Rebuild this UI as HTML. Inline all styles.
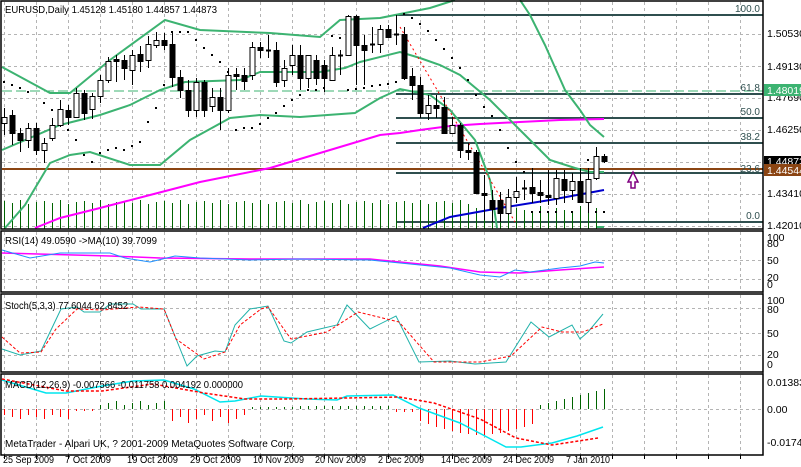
<!DOCTYPE html>
<html><head><meta charset="utf-8"><style>
html,body{margin:0;padding:0;background:#fff;}
svg{display:block;font-family:"Liberation Sans",sans-serif;font-size:10px;}
</style></head><body>
<svg id="c" width="801" height="467" viewBox="0 0 801 467" xmlns="http://www.w3.org/2000/svg">
<rect width="801" height="467" fill="#fff"/>
<g id="grid" stroke="#b4b4b4" stroke-dasharray="3,3" stroke-width="1"></g>
<line x1="2" y1="91" x2="763" y2="91" stroke="#3cb371" stroke-dasharray="10,4" stroke-width="1"/>
<line x1="2" y1="169" x2="763" y2="169" stroke="#8b4513" stroke-width="2"/>
<g stroke="#2f4f4f" stroke-width="2">
<line x1="396" y1="15" x2="763" y2="15"/><line x1="396" y1="94" x2="763" y2="94"/>
<line x1="396" y1="118" x2="763" y2="118"/><line x1="396" y1="143" x2="763" y2="143"/>
<line x1="396" y1="173" x2="763" y2="173"/><line x1="396" y1="222" x2="763" y2="222"/>
</g>
<g fill="#2f4f4f" font-size="10" text-anchor="end">
<text x="760" y="12">100.0</text><text x="760" y="91">61.8</text><text x="760" y="115">50.0</text>
<text x="760" y="140">38.2</text><text x="760" y="172">23.6</text><text x="760" y="219">0.0</text>
</g>
<g id="vol" stroke="#006400" stroke-width="1"></g>
<polyline fill="none" stroke="#ff00ff" stroke-width="2" points="35,228 60,218 100,208 150,195 200,182 270,168 330,150 380,135 400,133 420,130 450,126 480,124 520,122 560,120 604,119"/>
<polyline fill="none" stroke="#0000cd" stroke-width="2" points="423,228 450,217 500,208 550,200 604,190"/>
<g fill="none" stroke="#3cb371" stroke-width="2">
<polyline points="2,67 50,93 70,93 110,60 165,20 200,30 270,33 320,37 340,20 380,18 400,14 430,8 455,0"/>
<polyline points="520,0 530,15 545,45 565,90 580,110 590,125 604,137"/>
<polyline points="2,150 60,125 100,115 130,105 160,90 185,82 240,80 260,72 320,72 345,68 360,62 400,52 420,58 440,65 460,75 490,100 520,130 550,160 575,168 590,172 604,172"/>
<polyline points="5,228 25,205 50,163 70,155 90,152 130,165 160,165 190,140 230,118 260,115 300,117 355,113 380,98 400,89 430,95 450,110 475,140 490,180 497,228"/>
<polyline points="597,227 604,227"/>
</g>
<line x1="400" y1="27" x2="515" y2="222" stroke="#ff0000" stroke-dasharray="2,3"/>
<g id="sar" fill="#000"></g>
<g id="cand"></g>
<path d="M628 182 L633 172 L638 182 L635 182 L635 188 L631 188 L631 182 Z" fill="#fff" stroke="#800080" stroke-width="1.5"/>
<text x="5" y="13" fill="#000" textLength="212" lengthAdjust="spacingAndGlyphs">EURUSD,Daily  1.45128 1.45180 1.44857 1.44873</text>

<polyline fill="none" stroke="#ff00ff" stroke-width="1.5" points="2,253 110,256 160,258 250,259 370,259 400,262 440,266 480,272 520,273 560,270 604,267"/>
<polyline fill="none" stroke="#1e90ff" stroke-width="1" points="2,250 30,258 60,253 110,253 125,258 150,262 175,256 200,258 250,260 300,259 370,260 400,263 450,268 480,275 500,277 515,270 530,272 545,270 560,268 580,266 595,262 604,263"/>
<text x="5" y="244" fill="#000" textLength="152" lengthAdjust="spacingAndGlyphs">RSI(14) 49.0590  ->MA(10) 39.7099</text>

<polyline fill="none" stroke="#20b2aa" stroke-width="1" points="2,349 20,355 41,351 61,309 77,307 84,312 100,312 110,304 133,304 141,309 164,309 187,366 197,356 215,351 225,352 235,325 250,309 268,306 284,341 291,343 307,332 337,325 347,305 370,329 396,316 419,362 450,361 475,364 506,362 531,322 549,337 572,325 580,339 588,332 603,314"/>
<polyline fill="none" stroke="#ff0000" stroke-width="1" stroke-dasharray="3,2" points="2,337 20,353 41,352 56,329 77,309 102,310 138,307 164,309 176,339 204,359 225,352 240,325 261,309 268,307 291,339 307,336 327,332 358,312 399,322 434,362 480,362 511,356 542,327 562,332 583,332 603,324"/>
<text x="5" y="309" fill="#000" textLength="123" lengthAdjust="spacingAndGlyphs">Stoch(5,3,3) 77.6044 62.8452</text>

<g id="hist" stroke-width="1"></g>
<polyline fill="none" stroke="#00e5ee" stroke-width="1.5" points="2,380 46,393 66,393 102,386 133,381 164,380 194,389 220,402 235,401 261,396 307,399 337,400 347,396 393,395 419,408 460,423 485,436 506,447 521,447 552,443 577,436 603,427"/>
<polyline fill="none" stroke="#ff0000" stroke-width="1.5" stroke-dasharray="3,2" points="2,379 66,391 102,391 153,384 204,393 245,399 286,399 347,398 399,397 434,403 480,419 516,438 552,445 598,438"/>
<text x="5" y="388" fill="#000" textLength="238" lengthAdjust="spacingAndGlyphs">MACD(12,26,9) -0.007566 -0.011758 0.004192 0.000000</text>
<text x="5" y="447" fill="#000" textLength="290" lengthAdjust="spacingAndGlyphs">MetaTrader - Alpari UK, ? 2001-2009 MetaQuotes Software Corp.</text>

<g fill="none" stroke="#000" stroke-width="1.5">
<rect x="1" y="1" width="762" height="228"/>
<rect x="1" y="231" width="762" height="61"/>
<rect x="1" y="294" width="762" height="78"/>
<rect x="1" y="374" width="762" height="81"/>
</g>
<g stroke="#000"><line x1="763" y1="0" x2="763" y2="455"/></g>
<g fill="#000" font-size="10.5">
<text x="767" y="37">1.50530</text><text x="767" y="70">1.49130</text><text x="767" y="101">1.47690</text>
<text x="767" y="133">1.46250</text><text x="767" y="197">1.43410</text><text x="767" y="229">1.42010</text>
</g>
<rect x="764" y="84" width="37" height="12" fill="#3cb371"/><text x="767" y="94" fill="#fff" font-size="10.5">1.48019</text>
<rect x="764" y="156" width="37" height="11" fill="#000"/><text x="767" y="165" fill="#fff" font-size="10.5">1.44873</text>
<rect x="764" y="164" width="37" height="12" fill="#8b4513"/><text x="767" y="174" fill="#fff" font-size="10.5">1.44544</text>
<g fill="#000" font-size="10.5">
<text x="767" y="241">100</text><text x="767" y="247">80</text><text x="767" y="264">50</text><text x="767" y="281">20</text><text x="767" y="288">0</text>
<text x="767" y="304">100</text><text x="767" y="313">80</text><text x="767" y="337">50</text><text x="767" y="358">20</text><text x="767" y="368">0</text>
<text x="767" y="386">0.01383</text><text x="767" y="413">0.00</text><text x="767" y="446">-0.01747</text>
</g>
<g fill="#000" font-size="10" lengthAdjust="spacingAndGlyphs">
<text x="3" y="463" textLength="51" lengthAdjust="spacingAndGlyphs">25 Sep 2009</text>
<text x="65" y="463" textLength="46" lengthAdjust="spacingAndGlyphs">7 Oct 2009</text>
<text x="127" y="463" textLength="51" lengthAdjust="spacingAndGlyphs">19 Oct 2009</text>
<text x="190" y="463" textLength="51" lengthAdjust="spacingAndGlyphs">29 Oct 2009</text>
<text x="253" y="463" textLength="51" lengthAdjust="spacingAndGlyphs">10 Nov 2009</text>
<text x="315" y="463" textLength="51" lengthAdjust="spacingAndGlyphs">20 Nov 2009</text>
<text x="378" y="463" textLength="46" lengthAdjust="spacingAndGlyphs">2 Dec 2009</text>
<text x="441" y="463" textLength="51" lengthAdjust="spacingAndGlyphs">14 Dec 2009</text>
<text x="503" y="463" textLength="51" lengthAdjust="spacingAndGlyphs">24 Dec 2009</text>
<text x="566" y="463" textLength="44" lengthAdjust="spacingAndGlyphs">7 Jan 2010</text>
</g>
<g stroke="#000" id="ticks"></g>
</svg>
<script>
var NS="http://www.w3.org/2000/svg";
function el(p,t,a){var e=document.createElementNS(NS,t);for(var k in a)e.setAttribute(k,a[k]);document.getElementById(p).appendChild(e);return e;}
var hs=[34,66,98,130,162,194,226,260,279,308,333,355,409];
for(var x=4;x<763;x+=32){[[2,229],[232,292],[295,372],[375,455]].forEach(function(r){el('grid','line',{x1:x+.5,y1:r[0],x2:x+.5,y2:r[1]});});el('ticks','line',{x1:x+.5,y1:455,x2:x+.5,y2:459});}
hs.forEach(function(y){el('grid','line',{x1:2,y1:y+.5,x2:763,y2:y+.5});});
var C=[[4,108,135,123,117],[12,110,145,115,133],[20,128,152,133,140],[28,123,148,140,128],[36,123,155,128,150],[44,138,163,150,143],[52,118,141,138,125],[60,100,127,125,109],[68,105,125,110,117],[76,88,118,117,93],[84,90,120,93,113],[92,93,119,109,96],[100,75,103,96,80],[108,57,83,80,61],[116,55,82,59,61],[124,55,80,60,68],[132,50,85,70,55],[140,46,72,54,61],[148,36,68,60,44],[156,32,48,45,40],[164,33,50,40,45],[172,33,87,44,77],[180,70,98,77,90],[188,80,117,90,110],[196,78,117,110,82],[204,80,117,82,110],[212,88,112,106,97],[220,88,130,97,110],[228,68,113,110,75],[236,68,90,74,76],[244,68,90,75,81],[252,42,80,75,47],[260,42,58,47,50],[268,35,58,50,50],[276,42,87,50,82],[284,60,87,80,68],[292,45,75,65,55],[300,45,90,55,78],[308,55,88,78,55],[316,55,85,60,78],[324,60,92,65,78],[332,47,80,80,55],[340,50,75,55,55],[348,15,55,55,16],[356,15,85,16,45],[364,35,85,45,50],[372,27,53,44,44],[380,25,53,44,29],[388,25,38,29,37],[396,15,45,34,34],[404,27,80,34,78],[412,68,100,76,85],[420,77,118,85,113],[428,95,120,113,105],[436,95,118,105,108],[444,97,133,107,133],[452,117,133,133,125],[460,123,158,125,150],[468,143,160,150,152],[476,150,193,152,193],[484,175,220,193,195],[492,190,222,200,209],[500,192,222,200,213],[508,189,215,213,197],[516,177,203,197,191],[524,180,200,188,188],[532,168,203,187,193],[540,180,203,192,195],[548,170,205,195,197],[556,170,205,198,178],[564,170,203,179,190],[572,173,200,190,181],[580,168,203,181,202],[588,168,213,202,179],[596,147,180,178,156],[604,154,163,156,161]];
C.forEach(function(c,i){var x=c[0];el('cand','line',{x1:x+.5,y1:c[1],x2:x+.5,y2:c[2],stroke:'#000'});
var t=Math.min(c[3],c[4]),b=Math.max(c[3],c[4]);
if(b-t<1){el('cand','line',{x1:x-2,y1:t+.5,x2:x+3,y2:t+.5,stroke:'#000','stroke-width':2});}
else el('cand','rect',{x:x-2,y:t+.5,width:5,height:b-t,fill:c[3]>c[4]?'#fff':'#000',stroke:'#000'});
var vt=(x>470&&x<600)?[210,212,206,211,208][i%5]:[201,203,200,204,202][i%5];
if(x<600)el('vol','line',{x1:x+.5,y1:vt,x2:x+.5,y2:229});
});
var S=[[4,82],[12,85],[20,88],[28,92],[44,103],[52,110],[60,118],[68,130],[76,140],[84,155],[92,162],[100,153],[108,150],[116,148],[124,150],[132,146],[140,142],[148,122],[156,108],[164,85],[172,32],[180,32],[188,32],[196,40],[204,48],[212,55],[220,62],[228,72],[236,130],[244,128],[252,128],[260,124],[268,118],[276,113],[284,106],[292,100],[300,95],[308,90],[316,90],[324,88],[332,36],[340,38],[348,90],[356,89],[364,88],[372,86],[380,85],[388,84],[396,82],[404,14],[412,18],[420,24],[428,31],[436,40],[444,49],[452,58],[460,68],[468,80],[476,95],[484,107],[492,116],[500,130],[508,148],[516,162],[524,172],[588,160],[604,212],[596,212],[572,212],[556,212],[548,212],[540,212],[532,212]];
S.forEach(function(s){el('sar','rect',{x:s[0]-1,y:s[1]-1,width:2,height:2});});
for(var i=0;i<76;i++){var x=4+i*8,v;
if(x<70)v=-(6+(i%3)*2);else if(x<95)v=-2;else if(x<170)v=4+(i%3)*2;else if(x<245)v=-(6+((i*3)%5)*2);else if(x<300)v=2;else if(x<395)v=3;else if(x<420)v=-3;else if(x<540)v=-(12+Math.round(14*Math.sin((x-420)/120*Math.PI)));else v=4+((x-540)/8)*2;
el('hist','line',{x1:x+.5,y1:409,x2:x+.5,y2:409-v,stroke:v<0?'#ff0000':'#006400'});}
</script>
</body></html>
